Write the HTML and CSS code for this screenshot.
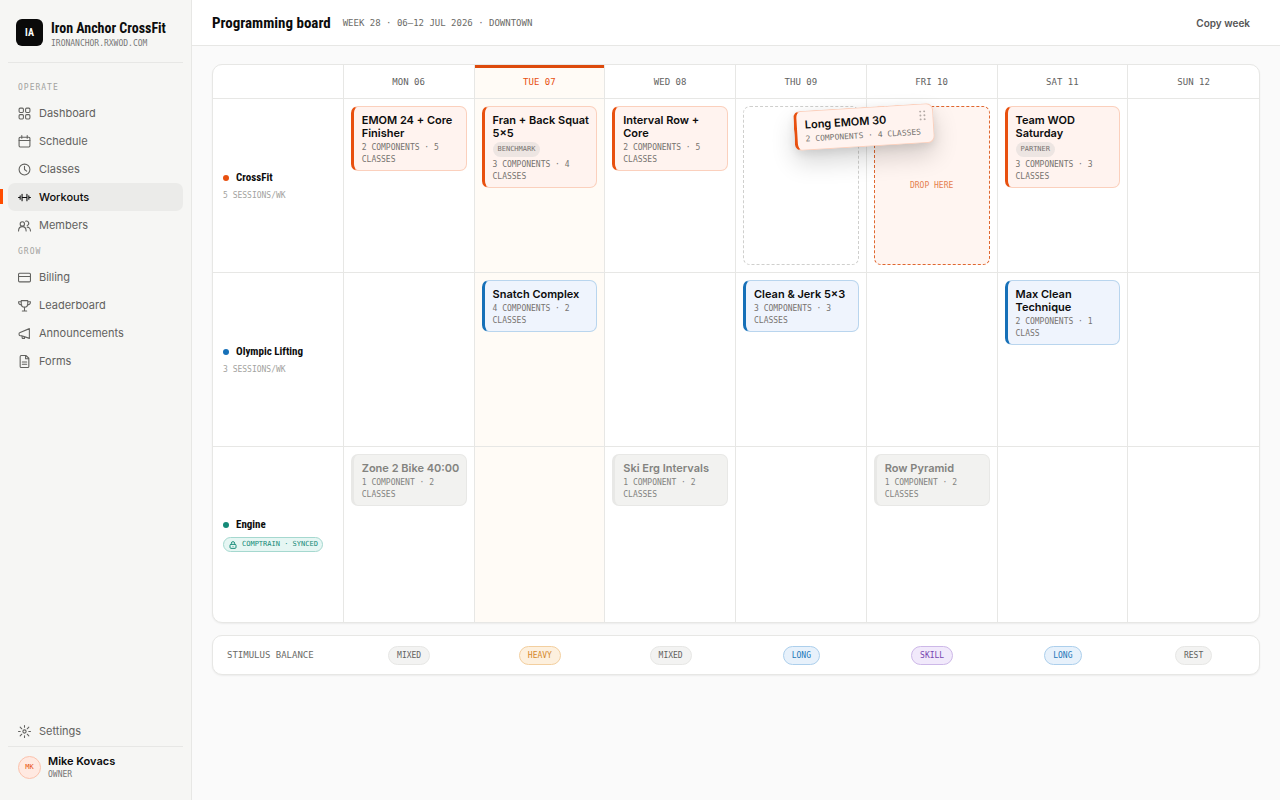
FILE: index.html
```
<!DOCTYPE html>
<html lang="en">
  <head>
    <meta charset="UTF-8" />
    <meta name="viewport" content="width=device-width, initial-scale=1.0" />
    <title>Programming board</title>
    <link rel="stylesheet" href="styles.css">
  </head>
  <body>
    <aside class="sidebar">
      <div class="brand">
        <div class="brand-logo">IA</div>
        <div>
          <div class="brand-name">Iron Anchor CrossFit</div>
          <div class="brand-url">IRONANCHOR.RXWOD.COM</div>
        </div>
      </div>

      <nav>
        <h2 class="nav-label">OPERATE</h2>
        <a class="nav-item" href="#">
          <svg viewBox="0 0 24 24"><rect x="2" y="2" width="8" height="8" rx="2" /><rect x="14" y="2" width="8" height="8" rx="2" /><rect x="2" y="14" width="8" height="8" rx="2" /><rect x="14" y="14" width="8" height="8" rx="2" /></svg>
          Dashboard
        </a>
        <a class="nav-item" href="#">
          <svg viewBox="0 0 24 24"><rect x="2" y="4" width="20" height="18" rx="2" /><path d="M2 10h20M7 1v5M17 1v5" /></svg>
          Schedule
        </a>
        <a class="nav-item" href="#">
          <svg viewBox="0 0 24 24"><circle cx="12" cy="12" r="10" /><path d="M12 6v6l4 3" /></svg>
          Classes
        </a>
        <a class="nav-item active" href="#">
          <svg viewBox="0 0 24 24"><path d="M8 12h8M1 12h2M21 12h2M4 9v6M20 9v6M7.500 6v12M16.500 6v12" /></svg>
          Workouts
        </a>
        <a class="nav-item" href="#">
          <svg viewBox="0 0 24 24"><circle cx="8" cy="9" r="4" /><path d="M1 22c0-5 3-8 7-8s7 3 7 8M14 4a4 4 0 1 1 3 8M17 15c3 0 6 3 6 7" /></svg>
          Members
        </a>

        <h2 class="nav-label grow">GROW</h2>
        <a class="nav-item" href="#">
          <svg viewBox="0 0 24 24"><rect x="1" y="4" width="22" height="16" rx="2" /><path d="M1 10h22" /></svg>
          Billing
        </a>
        <a class="nav-item" href="#">
          <svg viewBox="0 0 24 24"><path d="M6 3h12v6a6 6 0 0 1-12 0zM6 5H1c0 5 2 6 6 6M18 5h5c0 5-2 6-6 6M12 15v7M8 22h8" /></svg>
          Leaderboard
        </a>
        <a class="nav-item" href="#">
          <svg viewBox="0 0 24 24"><path d="M21 3v18L7 16H4a2 2 0 0 1-2-2v-2a2 2 0 0 1 2-2zM7 16l1 5h4v-3" /></svg>
          Announcements
        </a>
        <a class="nav-item" href="#">
          <svg viewBox="0 0 24 24"><path d="M15 1H6a2 2 0 0 0-2 2v18a2 2 0 0 0 2 2h12a2 2 0 0 0 2-2V6zM14 1v6h6M8 13h8M8 17h8" /></svg>
          Forms
        </a>
      </nav>

      <div class="sidebar-bottom">
        <a class="nav-item" href="#">
          <svg viewBox="0 0 24 24"><circle cx="12" cy="12" r="3" /><path d="M12 1v3M12 20v3M1 12h3M20 12h3M4 4l3 3M17 17l3 3M4 20l3-3M17 7l3-3" /></svg>
          Settings
        </a>
        <div class="user">
          <div class="avatar">MK</div>
          <div>
            <div class="user-name">Mike Kovacs</div>
            <div class="user-role">OWNER</div>
          </div>
        </div>
      </div>
    </aside>

    <div class="page">
      <header class="topbar">
        <h1>Programming board</h1>
        <span class="week">WEEK 28 · 06–12 JUL 2026 · DOWNTOWN</span>
        <button class="copy-button" type="button">Copy week</button>
      </header>

      <main>
        <table class="board">
          <thead>
            <tr>
              <td></td>
              <th scope="col">MON 06</th>
              <th scope="col" class="today">TUE 07</th>
              <th scope="col">WED 08</th>
              <th scope="col">THU 09</th>
              <th scope="col">FRI 10</th>
              <th scope="col">SAT 11</th>
              <th scope="col">SUN 12</th>
            </tr>
          </thead>
          <tbody>
            <!-- CrossFit -->
            <tr>
              <th scope="row">
                <div class="program"><span class="dot orange"></span>CrossFit</div>
                <div class="sessions">5 SESSIONS/WK</div>
              </th>
              <td>
                <div class="card">
                  <h3>EMOM 24 + Core Finisher</h3>
                  <p>2 COMPONENTS · 5 CLASSES</p>
                </div>
              </td>
              <td class="today">
                <div class="card">
                  <h3>Fran + Back Squat 5×5</h3>
                  <span class="tag">BENCHMARK</span>
                  <p>3 COMPONENTS · 4 CLASSES</p>
                </div>
              </td>
              <td>
                <div class="card">
                  <h3>Interval Row + Core</h3>
                  <p>2 COMPONENTS · 5 CLASSES</p>
                </div>
              </td>
              <td class="drag-cell">
                <div class="slot"></div>
                <div class="card dragging">
                  <h3>Long EMOM 30</h3>
                  <p>2 COMPONENTS · 4 CLASSES</p>
                  <svg class="grip" viewBox="0 0 8 10"><circle cx="2" cy="1" r="1" /><circle cx="6" cy="1" r="1" /><circle cx="2" cy="5" r="1" /><circle cx="6" cy="5" r="1" /><circle cx="2" cy="9" r="1" /><circle cx="6" cy="9" r="1" /></svg>
                </div>
              </td>
              <td>
                <div class="slot drop">DROP HERE</div>
              </td>
              <td>
                <div class="card">
                  <h3>Team WOD Saturday</h3>
                  <span class="tag">PARTNER</span>
                  <p>3 COMPONENTS · 3 CLASSES</p>
                </div>
              </td>
              <td></td>
            </tr>

            <!-- Olympic Lifting -->
            <tr>
              <th scope="row">
                <div class="program"><span class="dot blue"></span>Olympic Lifting</div>
                <div class="sessions">3 SESSIONS/WK</div>
              </th>
              <td></td>
              <td class="today">
                <div class="card lifting">
                  <h3>Snatch Complex</h3>
                  <p>4 COMPONENTS · 2 CLASSES</p>
                </div>
              </td>
              <td></td>
              <td>
                <div class="card lifting">
                  <h3>Clean &amp; Jerk 5×3</h3>
                  <p>3 COMPONENTS · 3 CLASSES</p>
                </div>
              </td>
              <td></td>
              <td>
                <div class="card lifting">
                  <h3>Max Clean Technique</h3>
                  <p>2 COMPONENTS · 1 CLASS</p>
                </div>
              </td>
              <td></td>
            </tr>

            <!-- Engine -->
            <tr>
              <th scope="row">
                <div class="program"><span class="dot green"></span>Engine</div>
                <div class="synced">
                  <svg viewBox="0 0 24 24"><rect x="3" y="10" width="18" height="12" rx="3" /><path d="M7 10V7a5 5 0 0 1 10 0v3M12 15v2" /></svg>
                  COMPTRAIN · SYNCED
                </div>
              </th>
              <td>
                <div class="card locked">
                  <h3>Zone 2 Bike 40:00</h3>
                  <p>1 COMPONENT · 2 CLASSES</p>
                </div>
              </td>
              <td class="today"></td>
              <td>
                <div class="card locked">
                  <h3>Ski Erg Intervals</h3>
                  <p>1 COMPONENT · 2 CLASSES</p>
                </div>
              </td>
              <td></td>
              <td>
                <div class="card locked">
                  <h3>Row Pyramid</h3>
                  <p>1 COMPONENT · 2 CLASSES</p>
                </div>
              </td>
              <td></td>
              <td></td>
            </tr>
          </tbody>
        </table>

        <section class="balance">
          <h2>STIMULUS BALANCE</h2>
          <span class="pill">MIXED</span>
          <span class="pill heavy">HEAVY</span>
          <span class="pill">MIXED</span>
          <span class="pill long">LONG</span>
          <span class="pill skill">SKILL</span>
          <span class="pill long">LONG</span>
          <span class="pill">REST</span>
        </section>
      </main>
    </div>
  </body>
</html>
```
FILE: styles.css
```
* {
  box-sizing: border-box;
}
:root {
  --mono: "DejaVu Sans Mono", monospace;
  --narrow: "Liberation Sans Narrow", "Roboto Condensed", Roboto, sans-serif;
  --line: #e7e7e5;
  --orange: #e8500f;
}
body {
  margin: 0;
  display: flex;
  min-height: 100vh;
  font-family: Inter, sans-serif;
  font-size: 11px;
  color: #0c0c0c;
  background-color: #fafafa;
}
h1,
h2,
h3,
p {
  margin: 0;
}

/* sidebar */
.sidebar {
  display: flex;
  flex-direction: column;
  flex: none;
  width: 192px;
  padding: 3px 8px 16px;
  background-color: #f6f6f4;
  border-right: 1px solid var(--line);
}
.brand {
  display: flex;
  align-items: center;
  gap: 8px;
  height: 60px;
  padding-left: 8px;
  border-bottom: 1px solid var(--line);
  margin-bottom: 14px;
}
.brand-logo {
  width: 27px;
  height: 27px;
  border-radius: 6px;
  background-color: #0a0a0a;
  color: #fff;
  font: bold 10px/27px var(--narrow);
  text-align: center;
}
.brand-name {
  padding-top: 3px;
  font: bold 14px/18px var(--narrow);
}
.brand-url {
  font: 8px/13px var(--mono);
  color: #777;
}
.nav-label {
  padding-left: 10px;
  font: 8px/22px var(--mono);
  letter-spacing: 1px;
  color: #a3a3a0;
}
.nav-label.grow {
  margin-top: 2px;
}
.nav-item {
  position: relative;
  display: flex;
  align-items: center;
  gap: 8px;
  height: 28px;
  padding-left: 10px;
  border-radius: 7px;
  color: #62625f;
  text-decoration: none;
}
.nav-item svg {
  width: 13px;
  height: 13px;
  fill: none;
  stroke: currentColor;
  stroke-width: 2;
  stroke-linecap: round;
  stroke-linejoin: round;
}
.nav-item.active {
  background-color: #ebebe9;
  color: #0c0c0c;
  font-weight: 500;
}
.nav-item.active::before {
  content: "";
  position: absolute;
  left: -8px;
  top: 6px;
  width: 3px;
  height: 15px;
  background-color: #ff4d00;
}
.sidebar-bottom {
  margin-top: auto;
}
.user {
  display: flex;
  align-items: center;
  gap: 7px;
  margin-top: 1px;
  padding: 7px 0 4px 10px;
  border-top: 1px solid var(--line);
}
.avatar {
  width: 23px;
  height: 23px;
  border: 1px solid #fbc3ad;
  border-radius: 50%;
  background-color: #ffe9e1;
  color: var(--orange);
  font: 7px/21px var(--mono);
  text-align: center;
}
.user-name {
  font-weight: 600;
  line-height: 15px;
}
.user-role {
  font: 8px/11px var(--mono);
  color: #777;
}

/* top bar */
.page {
  flex: 1;
  min-width: 0;
}
.topbar {
  display: flex;
  align-items: center;
  gap: 12px;
  height: 46px;
  padding: 0 20px;
  background-color: #fff;
  border-bottom: 1px solid var(--line);
}
.topbar h1 {
  font: bold 15px/20px var(--narrow);
}
.week {
  font: 9px/12px var(--mono);
  color: #6b6b68;
}
.copy-button {
  margin-left: auto;
  padding: 6px 10px;
  border: none;
  background: none;
  color: #555;
  font: 600 10px/14px Inter, sans-serif;
  cursor: pointer;
}

/* board */
main {
  padding: 18px 20px;
}
.board {
  width: 100%;
  table-layout: fixed;
  border: 1px solid var(--line);
  border-spacing: 0;
  border-radius: 10px;
  overflow: hidden;
  background-color: #fff;
  box-shadow: 0 1px 2px rgba(0, 0, 0, 0.06);
}
.board th,
.board td {
  padding: 0;
  border-right: 1px solid var(--line);
}
.board th:last-child,
.board td:last-child {
  border-right: none;
}
.board thead th {
  height: 33px;
  font: 9px/12px var(--mono);
  color: #62625f;
}
.board .today {
  background-color: #fffbf6;
}
.board thead .today {
  color: var(--orange);
  box-shadow: inset 0 3px 0 #dd4a0c;
}
.board tbody th,
.board tbody td {
  height: 174px;
  border-top: 1px solid var(--line);
}
.board tbody tr:last-child th {
  height: 176px;
}
.board tbody td {
  padding: 7px;
  vertical-align: top;
}
.board tbody th {
  padding: 0 10px;
  text-align: left;
  font-weight: normal;
}
.program {
  display: flex;
  align-items: center;
  gap: 7px;
  font: bold 11px/16px var(--narrow);
}
.dot {
  width: 6px;
  height: 6px;
  border-radius: 50%;
}
.orange {
  background-color: #e8500f;
}
.blue {
  background-color: #1670b8;
}
.green {
  background-color: #148a78;
}
.sessions {
  margin-top: 4px;
  font: 8px/12px var(--mono);
  color: #a3a3a0;
}
.synced {
  display: inline-flex;
  align-items: center;
  gap: 5px;
  margin-top: 4px;
  padding: 0 4px 0 5px;
  border: 1px solid #a5d8cf;
  border-radius: 8px;
  background-color: #e6f6f3;
  color: #148a78;
  font: 7px/13px var(--mono);
  white-space: nowrap;
}
.synced svg {
  width: 8px;
  height: 8px;
  fill: none;
  stroke: currentColor;
  stroke-width: 3;
}

/* workout cards */
.card {
  padding: 7px 4px 4px 8px;
  border: 1px solid #fbd0bd;
  border-left: 3px solid var(--orange);
  border-radius: 7px;
  background-color: #fff3ef;
}
.card h3 {
  font-weight: 600;
  font-size: 11px;
  line-height: 13px;
}
.card p {
  margin-top: 2px;
  font: 8px/12px var(--mono);
  color: #777370;
}
.tag {
  display: block;
  width: fit-content;
  margin-top: 2px;
  padding: 0 5px;
  border-radius: 8px;
  background-color: #ede5e2;
  color: #777370;
  font: 7px/15px var(--mono);
}
.card.lifting {
  border-color: #b9d5ee;
  border-left-color: #1670b8;
  background-color: #eff4fd;
}
.card.locked {
  border-color: #e8e8e6;
  background-color: #f2f2f0;
}
.card.locked h3,
.card.locked p {
  color: #83837f;
}
.slot {
  display: flex;
  align-items: center;
  justify-content: center;
  height: 159px;
  border: 1px dashed #cfcfcd;
  border-radius: 7px;
}
.slot.drop {
  border-color: #e0672f;
  background-color: #fff5f1;
  color: #e58050;
  font: 8px/12px var(--mono);
}
.drag-cell {
  position: relative;
}
.card.dragging {
  position: absolute;
  z-index: 2;
  top: 8px;
  left: 58px;
  width: 140px;
  transform: rotate(-3.5deg);
  box-shadow: 0 12px 24px rgba(0, 0, 0, 0.16), 0 3px 8px rgba(0, 0, 0, 0.08);
}
.card.dragging p {
  white-space: nowrap;
}
.grip {
  position: absolute;
  top: 6px;
  right: 6px;
  width: 8px;
  height: 10px;
  fill: #b3aaa6;
}

/* stimulus balance */
.balance {
  display: grid;
  grid-template-columns: repeat(8, 1fr);
  align-items: center;
  justify-items: center;
  height: 40px;
  margin-top: 12px;
  border: 1px solid var(--line);
  border-radius: 10px;
  background-color: #fff;
  box-shadow: 0 1px 2px rgba(0, 0, 0, 0.06);
}
.balance h2 {
  justify-self: start;
  padding-left: 14px;
  font: 9px/12px var(--mono);
  color: #6b6b68;
}
.pill {
  padding: 0 8px;
  border: 1px solid #e7e7e5;
  border-radius: 10px;
  background-color: #f3f3f2;
  color: #62625f;
  font: 8px/17px var(--mono);
}
.pill.heavy {
  border-color: #f3cf9f;
  background-color: #fdf0de;
  color: #d58a2c;
}
.pill.long {
  border-color: #accfec;
  background-color: #e7f1fb;
  color: #2277b8;
}
.pill.skill {
  border-color: #cdb8e8;
  background-color: #f1e9fb;
  color: #7745b0;
}
```
